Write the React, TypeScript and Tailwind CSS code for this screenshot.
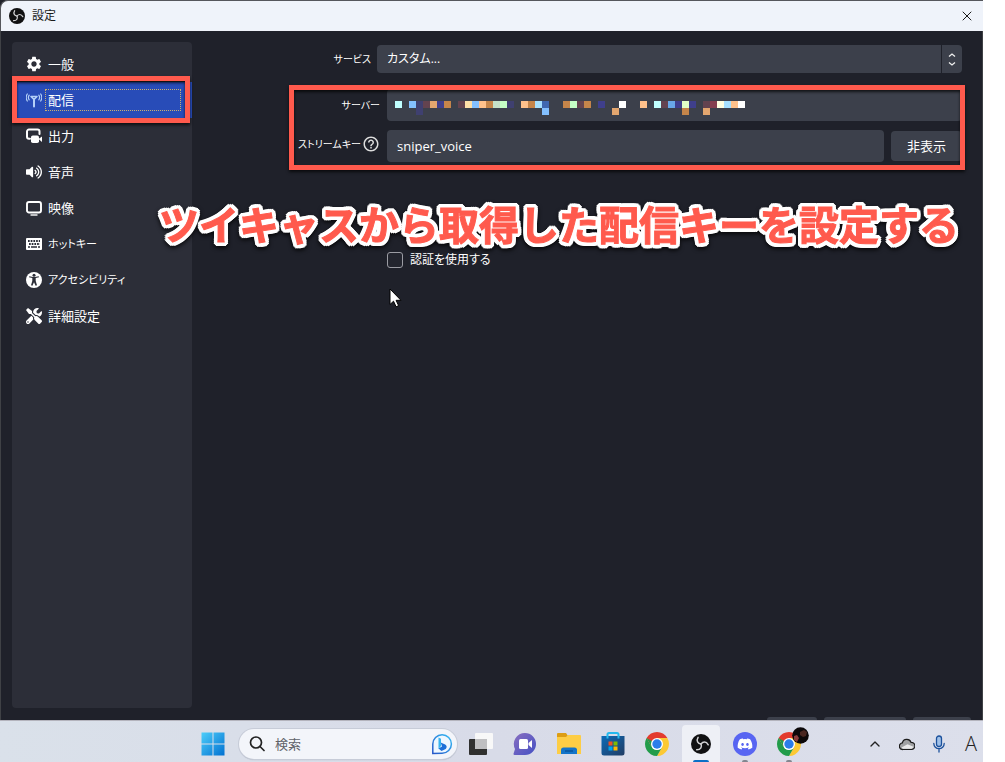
import type { ReactNode } from "react";
import { FaDiscord, FaTools, FaVolumeUp } from "react-icons/fa";
import { MdSettings, MdHelpOutline } from "react-icons/md";
import { ChevronUp, X } from "lucide-react";

const c = {
  cyan: "#c0ffff", blue: "#83c0ff", slate: "#3f4070", maroon: "#63434f", sand: "#e3a66f",
  navy: "#3f3f8c", tan: "#c5854a", cream: "#ffe0a8", peach: "#ffc18b", sage: "#c5e0c8",
  mint: "#c5ffc5", sky: "#a6e0ff", royal: "#4068b0", lime: "#e0ffc5", wine: "#853f4f",
  azure: "#68a8e8", ivory: "#ffffe0", white: "#ffffff",
};

const blocks: [number, number, string][] = [
  [0, 0, c.cyan], [2, 0, c.blue], [3, 0, c.slate], [3, 1, c.slate], [4, 0, c.maroon], [5, 0, c.sand],
  [6, 0, c.navy], [7, 0, c.tan], [9, 0, c.maroon], [10, 0, c.cream], [11, 0, c.blue], [12, 0, c.peach],
  [13, 0, c.tan], [14, 0, c.sage], [15, 0, c.mint], [16, 0, c.slate], [18, 0, c.peach], [19, 0, c.tan],
  [20, 0, c.sky], [21, 0, c.royal], [21, 1, c.blue], [24, 0, c.tan], [25, 0, c.mint], [26, 0, c.maroon],
  [27, 0, c.tan], [29, 0, c.navy], [31, 1, c.sand], [32, 0, c.white], [35, 0, c.peach], [37, 0, c.cyan],
  [38, 0, c.maroon], [39, 0, c.azure], [40, 0, c.navy], [41, 0, c.lime], [41, 1, c.tan], [42, 0, c.navy],
  [44, 0, c.maroon], [44, 1, c.sand], [45, 0, c.wine], [46, 0, c.ivory], [47, 0, c.sky], [48, 0, c.peach],
  [49, 0, c.white],
];

function Antenna() {
  return (
    <svg width="16" height="16" viewBox="0 0 16 16" fill="none" stroke="#b4d0f8" strokeLinecap="round">
      <path d="M5 4.500h6L8 7.500z" strokeWidth="1.600" strokeLinejoin="round" />
      <path d="M8 7.500v7" strokeWidth="2" />
      <path d="M3.200 3.200a4 4 0 0 0 0 4.600M12.800 3.200a4 4 0 0 1 0 4.600M1.300 2a6.500 6.500 0 0 0 0 7M14.700 2a6.500 6.500 0 0 1 0 7" strokeWidth="1.200" />
    </svg>
  );
}

function Output() {
  return (
    <svg width="16" height="16" viewBox="0 0 16 16" fill="none">
      <path d="M4 10.700H3A2 2 0 0 1 1 8.700V3.500A2 2 0 0 1 3 1.500h8.500a2 2 0 0 1 2 2V6" stroke="#fff" strokeWidth="2" strokeLinecap="round" />
      <rect x="5" y="7.500" width="8" height="7.500" rx="1.800" fill="#fff" />
      <path d="M12.500 11l3.500-2.500V14z" fill="#fff" />
    </svg>
  );
}

function Display() {
  return (
    <svg width="16" height="16" viewBox="0 0 16 16" fill="none" stroke="#fff">
      <rect x="1" y="2" width="14" height="10.500" rx="2" strokeWidth="1.900" />
      <path d="M4.500 15h7" strokeWidth="1.400" />
    </svg>
  );
}

function Keyboard() {
  return (
    <svg width="16" height="16" viewBox="0 0 16 16">
      <rect y="2" width="16" height="12" rx="1" fill="#fff" />
      <path d="M2 5h12M3 8h11" stroke="#2c2e38" strokeWidth="1.800" strokeDasharray="1.700 1" />
      <path d="M2 11h2M5 11h6M12 11h2" stroke="#2c2e38" strokeWidth="1.600" />
    </svg>
  );
}

function Accessibility() {
  return (
    <svg width="16" height="16" viewBox="0 0 16 16">
      <circle cx="8" cy="8" r="8" fill="#fff" />
      <circle cx="8" cy="3.200" r="1.500" fill="#2c2e38" />
      <path d="M3 5.200l3.300.9v3L5 13.300l1.400.5L8 10.200l1.600 3.600 1.400-.5-1.300-4.200v-3l3.300-.9-.3-1-3.700.8H7l-3.700-.8z" fill="#2c2e38" />
    </svg>
  );
}

function Chrome() {
  return (
    <svg width="24" height="24" viewBox="0 0 24 24">
      <path d="M12 12V6h10.390A12 12 0 0 1 12 24l5.200-9z" fill="#fcc934" />
      <path d="M1.610 6L6.800 15a6 6 0 0 0 10.400 0L12 24A12 12 0 0 1 1.610 6z" fill="#229c4a" />
      <path d="M6.500 14.500L1.610 6A12 12 0 0 1 22.390 6H12z" fill="#e33b2e" />
      <path d="M1.610 6L6.800 15 12 12z" fill="#229c4a" />
      <circle cx="12" cy="12" r="6" fill="#fff" />
      <circle cx="12" cy="12" r="4.700" fill="#2b7de9" />
    </svg>
  );
}

function WindowsLogo() {
  return (
    <svg width="24" height="24" viewBox="0 0 24 24">
      <defs>
        <linearGradient id="win" gradientUnits="userSpaceOnUse" x1="0" y1="0" x2="24" y2="24">
          <stop stopColor="#4fd0fb" /><stop offset="1" stopColor="#006fd0" />
        </linearGradient>
      </defs>
      <path d="M.5.500h11v11H.5zM12.500.500h11v11h-11zM.5 12.500h11v11H.5zM12.500 12.500h11v11h-11z" fill="url(#win)" />
    </svg>
  );
}

function Bing() {
  return (
    <svg className="shrink-0" width="22" height="22" viewBox="0 0 22 22" fill="none">
      <defs>
        <linearGradient id="bing" x1="0" y1="1" x2="1" y2="0">
          <stop stopColor="#2556c8" /><stop offset="1" stopColor="#35bdf5" />
        </linearGradient>
      </defs>
      <path d="M1.800 20.500V11a9.300 9.300 0 1 1 9.300 9.300z" fill="#eef7ff" stroke="url(#bing)" strokeWidth="1.500" />
      <path d="M7.500 4.500l2.500 1.200v7.300l-2.500 3z" fill="#37b5f0" />
      <path d="M7.500 15.500l3.500-2-1.300-4 4.500 2a3 3 0 0 1 .5 4.400L10.500 18z" fill="#1d6fd8" />
    </svg>
  );
}

function TaskView() {
  return (
    <svg width="24" height="24" viewBox="0 0 24 24">
      <rect y="7" width="18" height="16" rx="1" fill="#30302f" />
      <rect x="6" y="1" width="18" height="16" rx="1" fill="#f8f8f8" />
      <rect x="6" y="7" width="12" height="10" fill="#bfbfc1" />
    </svg>
  );
}

function Chat() {
  return (
    <svg width="24" height="24" viewBox="0 0 24 24">
      <defs>
        <linearGradient id="chat" x1="0" y1="0" x2="1" y2="1">
          <stop stopColor="#8a6fc0" /><stop offset="1" stopColor="#4450c4" />
        </linearGradient>
      </defs>
      <path d="M12 1a11 11 0 1 1 0 22H1.500a1 1 0 0 1-.9-1.500L2 17A11 11 0 0 1 12 1z" fill="url(#chat)" />
      <rect x="6" y="7" width="9" height="10" rx="1.500" fill="#fff" />
      <path d="M15.500 11l3.500-3v8l-3.500-3z" fill="#fff" />
    </svg>
  );
}

function Folder() {
  return (
    <svg width="24" height="24" viewBox="0 0 24 24">
      <path d="M0 2a1 1 0 0 1 1-1h8l2 3v6H0z" fill="#dd9d14" />
      <path d="M0 5h9l2-2h12a1 1 0 0 1 1 1v18H0z" fill="#fdcd45" />
      <path d="M4 22v-4a2.500 2.500 0 0 1 2.500-2.500h11A2.500 2.500 0 0 1 20 18v4z" fill="#1474c8" />
      <path d="M8 19h8" stroke="#0a559c" strokeWidth="1.500" />
    </svg>
  );
}

function Store() {
  return (
    <svg width="24" height="24" viewBox="0 0 24 24">
      <defs>
        <linearGradient id="store" x1="0" y1="0" x2="1" y2="1">
          <stop stopColor="#0b6bb8" /><stop offset="1" stopColor="#223c63" />
        </linearGradient>
      </defs>
      <path d="M.5 4h23v17a2.500 2.500 0 0 1-2.500 2.500H3A2.500 2.500 0 0 1 .5 21z" fill="url(#store)" />
      <path d="M6.500 6.500V2.500a1.500 1.500 0 0 1 1.500-1.500h8a1.500 1.500 0 0 1 1.500 1.500v4" fill="none" stroke="#24b9ee" strokeWidth="2" />
      <path d="M7.500 9.500h4v4h-4z" fill="#f25022" /><path d="M12.500 9.500h4v4h-4z" fill="#7fba00" />
      <path d="M7.500 14.500h4v4h-4z" fill="#00a4ef" /><path d="M12.500 14.500h4v4h-4z" fill="#ffb900" />
    </svg>
  );
}

function ObsMark({ size }: { size: number }) {
  return (
    <svg width={size} height={size} viewBox="0 0 24 24" fill="none">
      <circle cx="12" cy="12" r="12" fill="#111112" />
      <g stroke="#d2d2d4" strokeWidth="1.800" strokeLinecap="round">
        {[0, 120, 240].map((a) => (
          <path key={a} d="M12 12C8.500 11.500 5.800 8.500 8.500 4" transform={`rotate(${a} 12 12)`} />
        ))}
      </g>
    </svg>
  );
}

const nav: { label: string; icon: ReactNode; small?: boolean }[] = [
  { label: "一般", icon: <MdSettings size={18} className="shrink-0" /> },
  { label: "配信", icon: <Antenna /> },
  { label: "出力", icon: <Output /> },
  { label: "音声", icon: <FaVolumeUp size={16} /> },
  { label: "映像", icon: <Display /> },
  { label: "ホットキー", icon: <Keyboard />, small: true },
  { label: "アクセシビリティ", icon: <Accessibility />, small: true },
  { label: "詳細設定", icon: <FaTools size={16} /> },
];

const frame =
  "pointer-events-none absolute border-[5px] border-[#ff5a4d] shadow-[0_2px_3px_rgba(0,0,0,0.7),inset_0_2px_3px_rgba(0,0,0,0.7)]";

function Sidebar() {
  return (
    <nav className="w-[180px] shrink-0 rounded bg-[#2c2e38] py-1">
      {nav.map(({ label, icon, small }, i) => (
        <div key={label} className="relative">
          <button
            type="button"
            className={
              i === 1
                ? "flex h-9 w-full items-center gap-[3px] bg-[#284cb8] pl-3.5 pr-[11px] text-left"
                : "flex h-9 w-full items-center gap-[3px] pl-3.5 pr-[11px] text-left"
            }
          >
            <span className="flex w-4 shrink-0 justify-center">{icon}</span>
            <span
              className={
                i === 1
                  ? "flex h-[22px] flex-1 items-center border border-dotted border-[#c9b073] pl-0.5"
                  : small
                    ? "pl-[3px] text-[11px]"
                    : "pl-[3px]"
              }
            >
              {label}
            </span>
          </button>
          {i === 1 && <span className={`${frame} -bottom-[5px] -top-1.5 left-0 right-0.5 z-10`} />}
        </div>
      ))}
    </nav>
  );
}

function Form() {
  return (
    <main className="relative min-w-0 flex-1 pr-5 pt-[3px]">
      <div className="flex items-center gap-1.5">
        <label htmlFor="service" className="w-[179px] shrink-0 text-right text-[10px]">サービス</label>
        <div className="relative flex h-7 flex-1">
          <select id="service" className="w-full appearance-none rounded bg-[#3c404b] pl-2.5 pr-7 text-xs outline-none">
            <option>カスタム...</option>
          </select>
          <svg className="pointer-events-none absolute right-0 top-0" width="21" height="28" viewBox="0 0 21 28" fill="none">
            <path d="M.5 0v28" stroke="#1f212a" />
            <path d="M8 11.500l3-2.500 3 2.500M8 17.500l3 2.500 3-2.500" stroke="#f0f0f0" strokeWidth="1.300" />
          </svg>
        </div>
      </div>

      <div className="relative mt-4 flex flex-col gap-[9px]">
        <div className="flex items-center gap-[7px]">
          <label htmlFor="server" className="w-[188px] shrink-0 text-right text-[10px]">サーバー</label>
          <div className="relative flex h-8 flex-1">
            <input id="server" type="text" readOnly className="w-full rounded bg-[#3c404b] px-2.5 outline-none" />
            <svg className="pointer-events-none absolute left-2 top-3" width="350" height="14" shapeRendering="crispEdges">
              {blocks.map(([x, y, fill]) => (
                <rect key={`${x}-${y}`} x={x * 7} y={y * 7} width="7" height="7" fill={fill} />
              ))}
            </svg>
          </div>
        </div>
        <div className="flex items-center gap-[7px]">
          <label htmlFor="key" className="flex w-[188px] shrink-0 items-center justify-end gap-px whitespace-nowrap pb-1 text-[10px]">
            ストリームキー
            <MdHelpOutline size={18} className="shrink-0 text-[#dcdcdc]" />
          </label>
          <input
            id="key"
            type="text"
            defaultValue="sniper_voice"
            className="h-8 min-w-0 flex-1 rounded bg-[#3c404b] px-2.5 outline-none"
          />
          <button type="button" className="h-[30px] w-[71px] rounded bg-[#3c404b]">非表示</button>
        </div>
        <span className={`${frame} -bottom-2 -right-[3px] -top-1 left-[97px]`} />
      </div>

      <label className="ml-[195px] mt-[88px] flex h-5 items-center gap-[7px] text-xs">
        <input type="checkbox" className="size-4 appearance-none rounded-[3px] border border-[#9b9ca3] bg-[#23252e]" />
        認証を使用する
      </label>

      <svg className="absolute left-[197px] top-[246px]" width="13" height="20" viewBox="0 0 13 20">
        <path d="M1 1v15.500l3.500-3.300 2.600 5.600 2.500-1.200-2.500-5.300H12z" fill="#fff" stroke="#000" />
      </svg>
    </main>
  );
}

function Task({ label, active, running, children }: { label: string; active?: boolean; running?: boolean; children: ReactNode }) {
  return (
    <button
      type="button"
      aria-label={label}
      className={
        active
          ? "relative flex h-[37px] w-[38px] items-center justify-center rounded-t bg-[#eef0f6]"
          : "relative flex h-[37px] w-[38px] items-center justify-center"
      }
    >
      {children}
      {active && <span className="absolute bottom-0 h-0.5 w-4 rounded-t bg-[#0a6fc7]" />}
      {running && <span className="absolute bottom-0 h-0.5 w-1.5 rounded-t bg-[#83868f]" />}
    </button>
  );
}

function Taskbar() {
  return (
    <footer className="flex h-[42px] shrink-0 items-end border-t border-[#b4b4bd] bg-linear-to-r from-[#dae1ea] via-[#d8dbe8] to-[#dcdfeb] pl-[194px] pr-1 text-[#222]">
      <Task label="スタート"><WindowsLogo /></Task>
      <label className="mb-[3px] ml-[7px] mr-[5px] flex h-[30px] w-[218px] items-center rounded-full bg-[#f3f5fa] pl-2.5 pr-1 shadow-[0_0_0_1px_#c7ccd8,0_1px_1px_#9aa0af]">
        <svg className="shrink-0" width="16" height="16" viewBox="0 0 16 16" fill="none" stroke="#222" strokeWidth="1.700" strokeLinecap="round">
          <circle cx="7" cy="6.500" r="5.500" /><path d="M11 10.500l4 4" />
        </svg>
        <input type="text" placeholder="検索" aria-label="検索" className="ml-2.5 w-full min-w-0 text-[13px] outline-none placeholder:text-[#606269]" />
        <Bing />
      </label>
      <div className="flex gap-1.5">
        <Task label="タスク ビュー"><TaskView /></Task>
        <Task label="チャット"><Chat /></Task>
        <Task label="エクスプローラー"><Folder /></Task>
        <Task label="ストア"><Store /></Task>
        <Task label="Chrome"><Chrome /></Task>
        <Task label="OBS" active><ObsMark size={20} /></Task>
        <Task label="Discord" running>
          <span className="flex size-6 items-center justify-center rounded-full bg-[#5865f2] text-white"><FaDiscord size={16} /></span>
        </Task>
        <Task label="Chrome" running>
          <Chrome />
          <svg className="absolute right-[-1px] top-0.5" width="17" height="17" viewBox="0 0 17 17">
            <circle cx="8.500" cy="8.500" r="8.300" fill="#0c0809" />
            <path d="M8 5l4-2 3 2-1 4-3 1-3-2z" fill="#4a2620" />
            <path d="M2 9l3-1 2 3-2 4-3-2z" fill="#8b3c3c" />
          </svg>
        </Task>
      </div>
      <div className="ml-auto flex h-[37px] items-center gap-4">
        <ChevronUp size={16} strokeWidth={2} />
        <svg width="16" height="16" viewBox="0 0 16 16">
          <path d="M4 13.500a3.300 3.300 0 0 1-.6-6.600A4.500 4.500 0 0 1 12 6.300a3.600 3.600 0 0 1 .5 7.200z" fill="#a0a1a3" stroke="#1c1c1c" strokeWidth="1.200" />
          <path d="M2.500 11.500L8.500 8.200l6 2.600a2.800 2.800 0 0 1-2.200 2H4z" fill="#e9e9ea" />
        </svg>
        <svg width="16" height="18" viewBox="0 0 16 18" fill="none" stroke="#1c519c" strokeWidth="1.300" strokeLinecap="round">
          <rect x="5.500" y="1" width="5" height="10.500" rx="2.500" fill="#9fc0e8" />
          <path d="M2.800 8.500a5.200 5.200 0 0 0 10.400 0M8 14v3" />
        </svg>
        <span className="w-4 text-center font-['Open_Sans',sans-serif] text-xl font-light">A</span>
      </div>
    </footer>
  );
}

export default function App() {
  return (
    <div className="min-h-screen bg-white pr-[22px] font-['Open_Sans','Noto_Sans_CJK_JP',sans-serif] text-[13px] leading-5 text-white [font-feature-settings:'palt']">
      <div className="flex min-h-screen flex-col bg-[#1f212a]">
        <header className="flex h-[31px] shrink-0 items-center gap-[7px] rounded-tl-lg border-l border-t border-[#55575c] bg-[#eff3fa] pl-2 pr-2 text-[#1a1a1a]">
          <ObsMark size={16} />
          <h1 className="text-xs">設定</h1>
          <button type="button" aria-label="閉じる" className="ml-auto"><X size={16} strokeWidth={1.5} /></button>
        </header>

        <div className="relative flex flex-1 flex-col border-x border-[#3f4145]">
          <div className="flex flex-1 pb-3 pl-[11px] pt-[11px]">
            <Sidebar />
            <Form />
          </div>
          <div className="absolute bottom-0 right-[11px] flex gap-[7px]" aria-hidden="true">
            <span className="h-[3px] w-[50px] rounded-t bg-[#3c404b]" />
            <span className="h-[3px] w-[82px] rounded-t bg-[#3c404b]" />
            <span className="h-[3px] w-[58px] rounded-t bg-[#3c404b]" />
          </div>
          <p className="absolute left-[158px] top-[170px] whitespace-nowrap text-[40px] font-bold leading-[48px] text-[#ff5a4d] drop-shadow-[0_2px_2px_rgba(0,0,0,0.8)] [-webkit-text-stroke:1px_#ff5a4d] [font-feature-settings:normal] [text-shadow:4px_0_#fff,-4px_0_#fff,0_4px_#fff,0_-4px_#fff,3px_3px_#fff,-3px_3px_#fff,3px_-3px_#fff,-3px_-3px_#fff,4px_2px_#fff,-4px_2px_#fff,4px_-2px_#fff,-4px_-2px_#fff,2px_4px_#fff,-2px_4px_#fff,2px_-4px_#fff,-2px_-4px_#fff,2px_2px_#fff,-2px_2px_#fff,2px_-2px_#fff,-2px_-2px_#fff]">
            ツイキャスから取得した配信キーを設定する
          </p>
        </div>

        <Taskbar />
      </div>
    </div>
  );
}
